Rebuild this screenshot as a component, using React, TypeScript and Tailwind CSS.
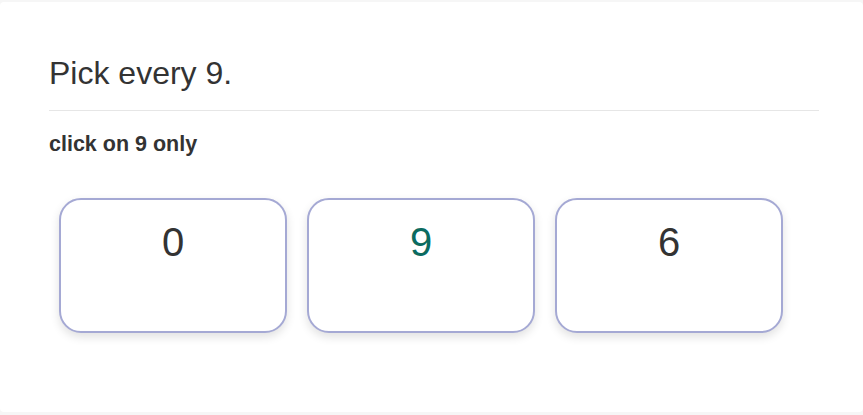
const digits = [
  { value: "0", target: false },
  { value: "9", target: true },
  { value: "6", target: false },
];

export default function App() {
  return (
    <div className="min-h-screen bg-[#f6f6f6] pt-[2px] font-['Liberation_Sans',Arial,sans-serif]">
      <div className="h-[410px] rounded-[4px] bg-white px-[49px] pt-[54px]">
        <h1 className="text-[32px] leading-[34px] text-[#333333]">Pick every 9.</h1>
        <hr className="mt-[20px] w-[770px] border-t border-[#e6e6e6]" />
        <p className="mt-[21px] text-[21.5px] font-bold leading-[25px] text-[#333333]">click on 9 only</p>
        <div className="mt-[41px] flex gap-[20px] pl-[10px]">
          {digits.map((d) => (
            <div
              key={d.value}
              className="flex h-[135px] w-[228px] cursor-pointer flex-col items-center rounded-[22px] border-2 border-[#a5a9d4] bg-white pt-[19px] shadow-[0_4px_10px_rgba(0,0,0,0.12)]"
            >
              <span
                className={
                  "text-[40px] leading-[46px] " +
                  (d.target ? "text-[#0c6b60]" : "text-[#333333]")
                }
              >
                {d.value}
              </span>
            </div>
          ))}
        </div>
      </div>
    </div>
  );
}
